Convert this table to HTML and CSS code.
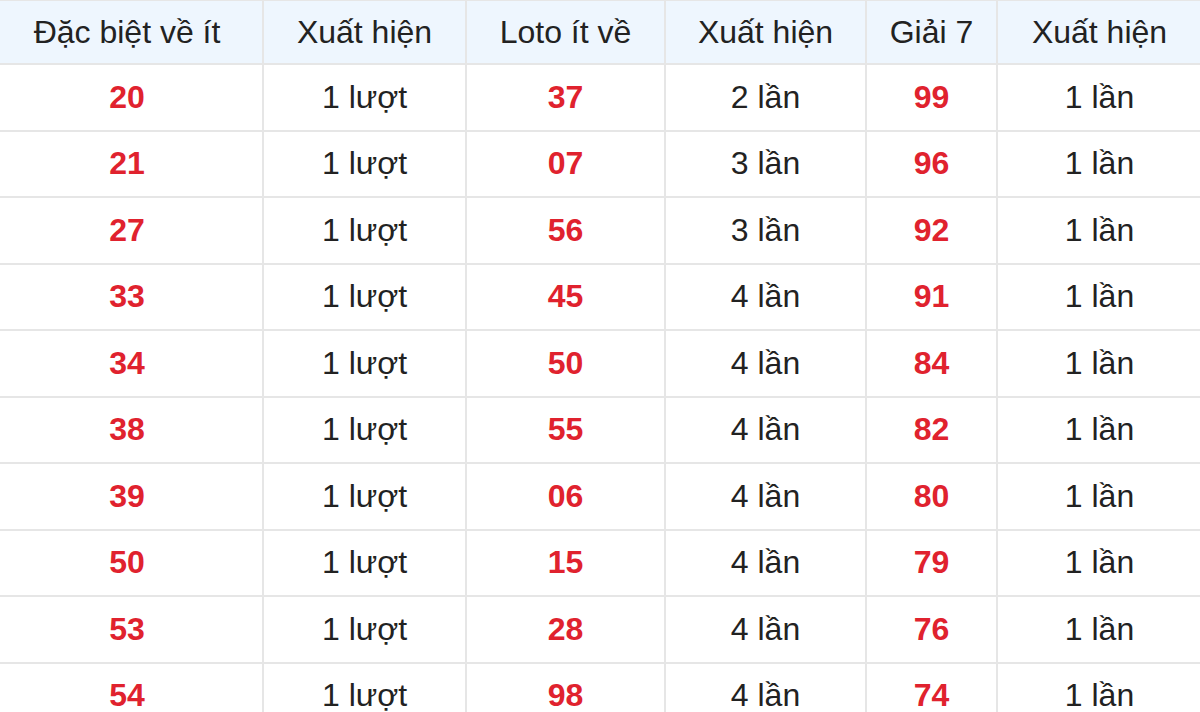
FILE: index.html
```html
<!DOCTYPE html>
<html lang="vi">
<head>
<meta charset="utf-8">
<link rel="stylesheet" href="styles.css">
</head>
<body>
<table class="stats">
  <colgroup>
    <col class="c1"><col class="c2"><col class="c3"><col class="c4"><col class="c5"><col class="c6">
  </colgroup>
  <thead>
    <tr><th>Đặc biệt về ít</th><th>Xuất hiện</th><th>Loto ít về</th><th>Xuất hiện</th><th>Giải 7</th><th>Xuất hiện</th></tr>
  </thead>
  <tbody>
    <tr><td class="num">20</td><td>1 lượt</td><td class="num">37</td><td>2 lần</td><td class="num">99</td><td>1 lần</td></tr>
    <tr><td class="num">21</td><td>1 lượt</td><td class="num">07</td><td>3 lần</td><td class="num">96</td><td>1 lần</td></tr>
    <tr><td class="num">27</td><td>1 lượt</td><td class="num">56</td><td>3 lần</td><td class="num">92</td><td>1 lần</td></tr>
    <tr><td class="num">33</td><td>1 lượt</td><td class="num">45</td><td>4 lần</td><td class="num">91</td><td>1 lần</td></tr>
    <tr><td class="num">34</td><td>1 lượt</td><td class="num">50</td><td>4 lần</td><td class="num">84</td><td>1 lần</td></tr>
    <tr><td class="num">38</td><td>1 lượt</td><td class="num">55</td><td>4 lần</td><td class="num">82</td><td>1 lần</td></tr>
    <tr><td class="num">39</td><td>1 lượt</td><td class="num">06</td><td>4 lần</td><td class="num">80</td><td>1 lần</td></tr>
    <tr><td class="num">50</td><td>1 lượt</td><td class="num">15</td><td>4 lần</td><td class="num">79</td><td>1 lần</td></tr>
    <tr><td class="num">53</td><td>1 lượt</td><td class="num">28</td><td>4 lần</td><td class="num">76</td><td>1 lần</td></tr>
    <tr><td class="num">54</td><td>1 lượt</td><td class="num">98</td><td>4 lần</td><td class="num">74</td><td>1 lần</td></tr>
  </tbody>
</table>
</body>
</html>
```

FILE: styles.css
```css
html, body {
  margin: 0;
  padding: 0;
  background: #ffffff;
  overflow: hidden;
}
body {
  font-family: "Liberation Sans", Arial, sans-serif;
  color: #222222;
}
.stats {
  border-collapse: collapse;
  table-layout: fixed;
  width: 1211px;
  margin-left: -10px;
  margin-top: -1px;
}
.c1 { width: 272px; }
.c2 { width: 203px; }
.c3 { width: 199px; }
.c4 { width: 201px; }
.c5 { width: 131px; }
.c6 { width: 205px; }
.stats th, .stats td {
  border: 2px solid #e6e6e6;
  text-align: center;
  vertical-align: middle;
  padding: 0;
  font-size: 32px;
}
.stats th {
  background: #eef6fe;
  font-weight: normal;
  color: #222222;
  height: 62px;
}
.stats td {
  height: 64.5px;
}
.stats td.num {
  color: #e0222e;
  font-weight: bold;
}
```
